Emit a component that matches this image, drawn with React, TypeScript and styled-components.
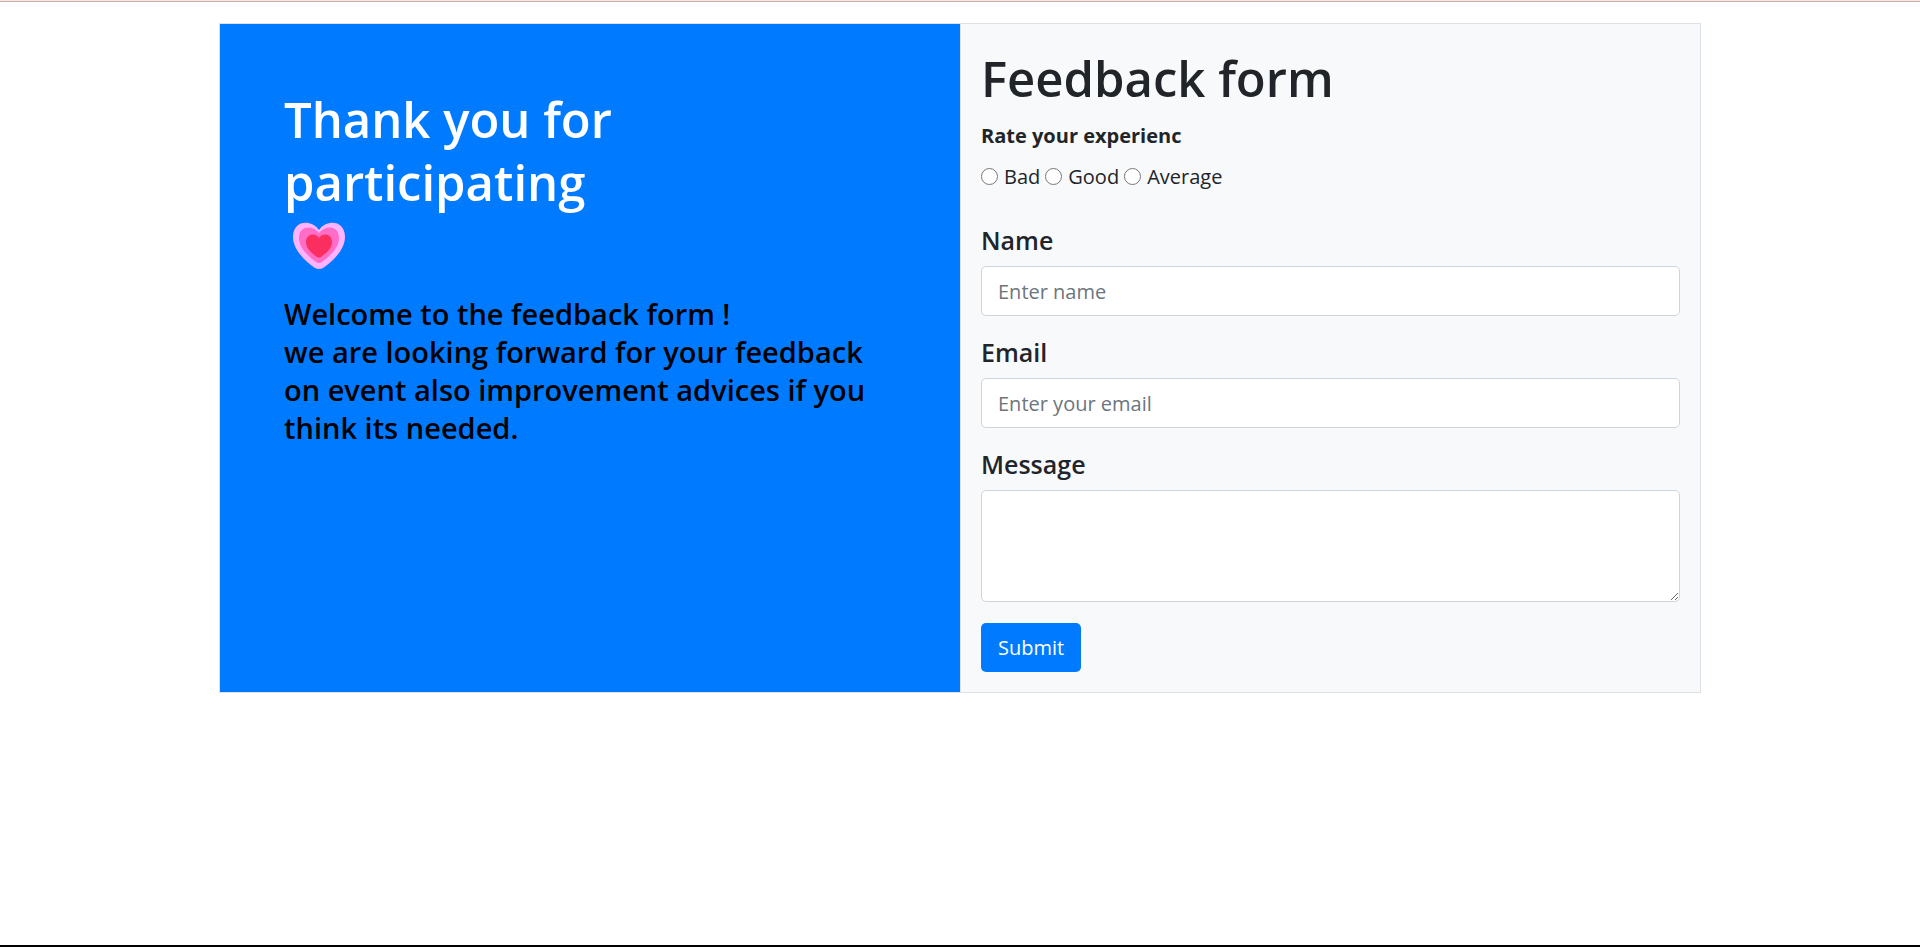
import React from "react";
import styled, { createGlobalStyle } from "styled-components";

const GlobalStyle = createGlobalStyle`
  *, *::before, *::after { box-sizing: border-box; }
  body {
    margin: 0;
    background: #fff;
    color: #212529;
    font-family: "Open Sans", "Noto Sans", sans-serif;
    font-size: 20px;
    line-height: 31px;
  }
  h1, h2, p { margin: 0; }
`;

const Page = styled.div`
  min-height: 100vh;
  display: flex;
  flex-direction: column;
  border-bottom: 2px solid #000;
`;

const TopRule = styled.div`
  height: 2px;
  background: #fde4dc;
  border-bottom: 1px solid #c4b0b0;
`;

const Card = styled.main`
  width: 100%;
  max-width: 1482px;
  margin: 21px auto;
  display: grid;
  grid-template-columns: 1fr 1fr;
  border: 1px solid #dee2e6;
`;

const Welcome = styled.section`
  background: #007bff;
  padding: 64px;
`;

const Title = styled.h1<{ $light?: boolean }>`
  font-size: 49px;
  line-height: 63px;
  font-weight: 600;
  color: ${(p) => (p.$light ? "#fff" : "inherit")};
`;

const Heart = styled.svg`
  display: block;
  width: 52px;
  height: 47px;
  margin: 8px 0 26px 9px;
`;

const Intro = styled.p`
  color: #000;
  font-size: 29px;
  line-height: 38px;
  font-weight: 600;
`;

const FormPanel = styled.form`
  display: flex;
  flex-direction: column;
  background: #f8f9fa;
  border-left: 1px solid #dee2e6;
  padding: 23px 20px 20px;
`;

const Rating = styled.fieldset`
  border: 0;
  margin: 0 0 33px;
  padding: 10px 0 0;
`;

const RatingTitle = styled.legend`
  float: left;
  width: 100%;
  padding: 0;
  font-weight: 700;
  margin-bottom: 10px;
`;

const Options = styled.div`
  clear: both;
  display: flex;
  gap: 5px;
`;

const Option = styled.label`
  display: flex;
  align-items: center;
  gap: 6px;
`;

const Radio = styled.input`
  width: 17px;
  height: 17px;
  margin: 0;
`;

const Field = styled.div`
  display: flex;
  flex-direction: column;
  margin-bottom: 21px;
`;

const Label = styled.label`
  font-size: 25px;
  line-height: 31px;
  font-weight: 600;
  margin-bottom: 10px;
`;

const controlStyle = `
  width: 100%;
  border: 1px solid #ced4da;
  border-radius: 5px;
  background: #fff;
  color: #495057;
  font: inherit;
  padding: 8px 16px;
  &::placeholder { color: #6c757d; opacity: 1; }
`;

const TextBox = styled.input`
  ${controlStyle}
  height: 50px;
`;

const TextArea = styled.textarea`
  ${controlStyle}
  display: block;
  height: 112px;
  resize: vertical;
`;

const Submit = styled.button`
  align-self: flex-start;
  height: 49px;
  padding: 0 17px;
  border: 0;
  border-radius: 5px;
  background: #007bff;
  color: #fff;
  font: inherit;
`;

const ratings = ["Bad", "Good", "Average"];

export default function App() {
  return (
    <>
      <GlobalStyle />
      <Page>
        <TopRule />
        <Card>
          <Welcome>
            <Title $light>
              Thank you for
              <br />
              participating
            </Title>
            <Heart viewBox="0 0 52 47" aria-hidden="true">
              <path fill="#ffb3ff" d="M26 8C18-3 0-2 0 15c0 13 13 25 22 31q4 2 8 0c9-6 22-18 22-31C52-2 34-3 26 8Z" />
              <path fill="#ff6dc6" d="M26 11C20 3 6 3 6 16c0 10 9 18 17 24q3 2 6 0c8-6 17-14 17-24C46 3 32 3 26 11Z" />
              <path fill="#fa2f60" d="M26 16C22 10 13 12 13 20c0 7 6 11 11 15q2 1 4 0c5-4 11-8 11-15 0-8-9-10-13-4Z" />
            </Heart>
            <Intro>
              Welcome to the feedback form !
              <br />
              we are looking forward for your feedback on event also improvement advices if you think its needed.
            </Intro>
          </Welcome>
          <FormPanel onSubmit={(e) => e.preventDefault()}>
            <Title>Feedback form</Title>
            <Rating>
              <RatingTitle>Rate your experienc</RatingTitle>
              <Options>
                {ratings.map((r) => (
                  <Option key={r}>
                    <Radio type="radio" name="rating" value={r} />
                    {r}
                  </Option>
                ))}
              </Options>
            </Rating>
            <Field>
              <Label htmlFor="name">Name</Label>
              <TextBox id="name" placeholder="Enter name" />
            </Field>
            <Field>
              <Label htmlFor="email">Email</Label>
              <TextBox id="email" type="email" placeholder="Enter your email" />
            </Field>
            <Field>
              <Label htmlFor="message">Message</Label>
              <TextArea id="message" />
            </Field>
            <Submit type="submit">Submit</Submit>
          </FormPanel>
        </Card>
      </Page>
    </>
  );
}
